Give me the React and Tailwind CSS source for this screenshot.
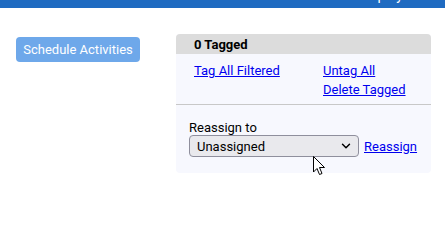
import { ChevronDown } from 'lucide-react'

export default function App() {
  return (
    <div className="relative w-[445px] h-[225px] bg-white font-['Roboto',sans-serif] text-[13px] text-black overflow-hidden">
      {/* top bar, mostly scrolled out of view */}
      <div className="h-2 bg-[#1f6bc1] overflow-hidden flex justify-end items-end pr-[42px]">
        <span className="text-white text-sm leading-none mb-[6px]">Display</span>
      </div>

      <div className="flex items-start pt-[26px] pl-4">
        <button className="mt-[3px] w-[124px] h-[25px] rounded-[4px] bg-[#6ea8ea] text-white text-[13px] leading-none">
          Schedule Activities
        </button>

        <div className="ml-9 w-[255px] rounded-[4px] bg-[#f7f8fe] overflow-hidden">
          <div className="h-5 bg-[#dcdcdc] pl-[18px] flex items-center font-bold leading-none">
            0 Tagged
          </div>
          <div className="flex pl-[18px] pt-[7px] pb-[5px]">
            <div className="w-[129px]">
              <a href="#" className="text-[#0000ee] underline leading-[19px] block">Tag All Filtered</a>
            </div>
            <div className="flex flex-col">
              <a href="#" className="text-[#0000ee] underline leading-[19px]">Untag All</a>
              <a href="#" className="text-[#0000ee] underline leading-[19px]">Delete Tagged</a>
            </div>
          </div>
          <div className="h-px bg-[#c8c8c8]" />
          <div className="pl-[13px] pt-[15px] pb-[16px]">
            <div className="leading-[15px]">Reassign to</div>
            <div className="flex items-center gap-[5px]">
              <div className="w-[170px] h-[22px] rounded-[4px] border border-[#8f8f9d] bg-[#e9e9ed] flex items-center justify-between pl-[7px] pr-[5px]">
                <span className="leading-none">Unassigned</span>
                <ChevronDown className="w-[14px] h-[14px]" strokeWidth={2.5} />
              </div>
              <a href="#" className="text-[#0000ee] underline leading-none">Reassign</a>
            </div>
          </div>
        </div>
      </div>

      {/* mouse cursor */}
      <svg className="absolute left-[313px] top-[156px]" width="14" height="21" viewBox="0 0 14 21">
        <path d="M0.5 0.5 L0.5 16 L4 12.5 L6.5 18.5 L9 17.5 L6.5 11.5 L11.5 11.5 Z" fill="white" stroke="black" strokeWidth="1" strokeLinejoin="round" />
      </svg>
    </div>
  )
}
